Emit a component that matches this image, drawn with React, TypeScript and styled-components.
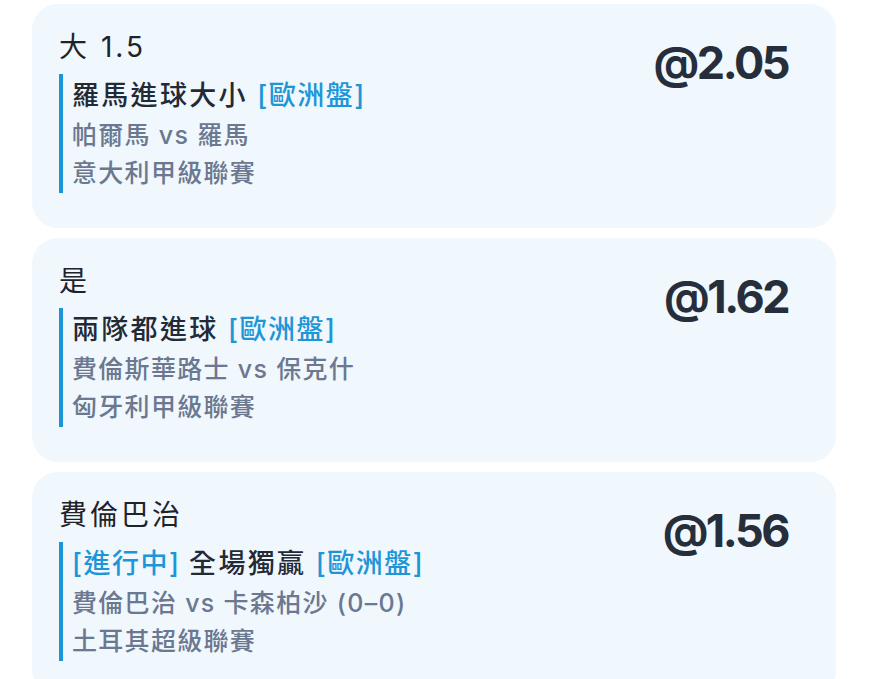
import React from 'react';
import styled, { createGlobalStyle } from 'styled-components';

interface Bet {
  selection: string;
  market: string;
  live?: boolean;
  match: string;
  league: string;
  odds: string;
}

const BETS: Bet[] = [
  {
    selection: '大 1.5',
    market: '羅馬進球大小',
    match: '帕爾馬 vs 羅馬',
    league: '意大利甲級聯賽',
    odds: '@2.05'
  },
  {
    selection: '是',
    market: '兩隊都進球',
    match: '費倫斯華路士 vs 保克什',
    league: '匈牙利甲級聯賽',
    odds: '@1.62'
  },
  {
    selection: '費倫巴治',
    market: '全場獨贏',
    live: true,
    match: '費倫巴治 vs 卡森柏沙 (0–0)',
    league: '土耳其超級聯賽',
    odds: '@1.56'
  }
];

const GlobalStyle = createGlobalStyle`
  body {
    margin: 0;
    background: #ffffff;
    font-family: "Inter", "Noto Sans CJK TC", sans-serif;
  }
`;

const List = styled.div`
  display: flex;
  flex-direction: column;
  gap: 10px;
  padding: 4px 33px 0 32px;
  height: 679px;
  overflow: hidden;
  box-sizing: border-box;
`;

const Card = styled.div`
  display: flex;
  justify-content: space-between;
  align-items: flex-start;
  flex-shrink: 0;
  height: 224px;
  box-sizing: border-box;
  padding: 24px 48px 0 27px;
  background: #f0f7fd;
  border-radius: 26px;
`;

const Info = styled.div`
  display: flex;
  flex-direction: column;
  gap: 8px;
`;

const Selection = styled.div`
  font-size: 28px;
  line-height: 38px;
  letter-spacing: 3px;
  color: #1f2329;
`;

const Details = styled.div`
  border-left: 4px solid #1b95d5;
  padding: 3px 0 0 9px;
`;

const Market = styled.div`
  font-size: 27px;
  line-height: 38.5px;
  font-weight: 500;
  letter-spacing: 2.3px;
  color: #222a35;
`;

const Tag = styled.span`
  color: #1d96d8;
  letter-spacing: 1.5px;
`;

const Sub = styled.div`
  font-size: 25px;
  line-height: 38.5px;
  font-weight: 500;
  letter-spacing: 1.3px;
  color: #6b7890;
`;

const Odds = styled.div`
  margin-top: 9px;
  font-size: 45px;
  line-height: 52px;
  font-weight: 700;
  letter-spacing: -2.5px;
  color: #272e3b;
`;

export default function App() {
  return (
    <>
      <GlobalStyle />
      <List>
        {BETS.map((bet) => (
          <Card key={bet.odds}>
            <Info>
              <Selection>{bet.selection}</Selection>
              <Details>
                <Market>
                  {bet.live && <Tag>[進行中] </Tag>}
                  {bet.market} <Tag>[歐洲盤]</Tag>
                </Market>
                <Sub>{bet.match}</Sub>
                <Sub>{bet.league}</Sub>
              </Details>
            </Info>
            <Odds>{bet.odds}</Odds>
          </Card>
        ))}
      </List>
    </>
  );
}
